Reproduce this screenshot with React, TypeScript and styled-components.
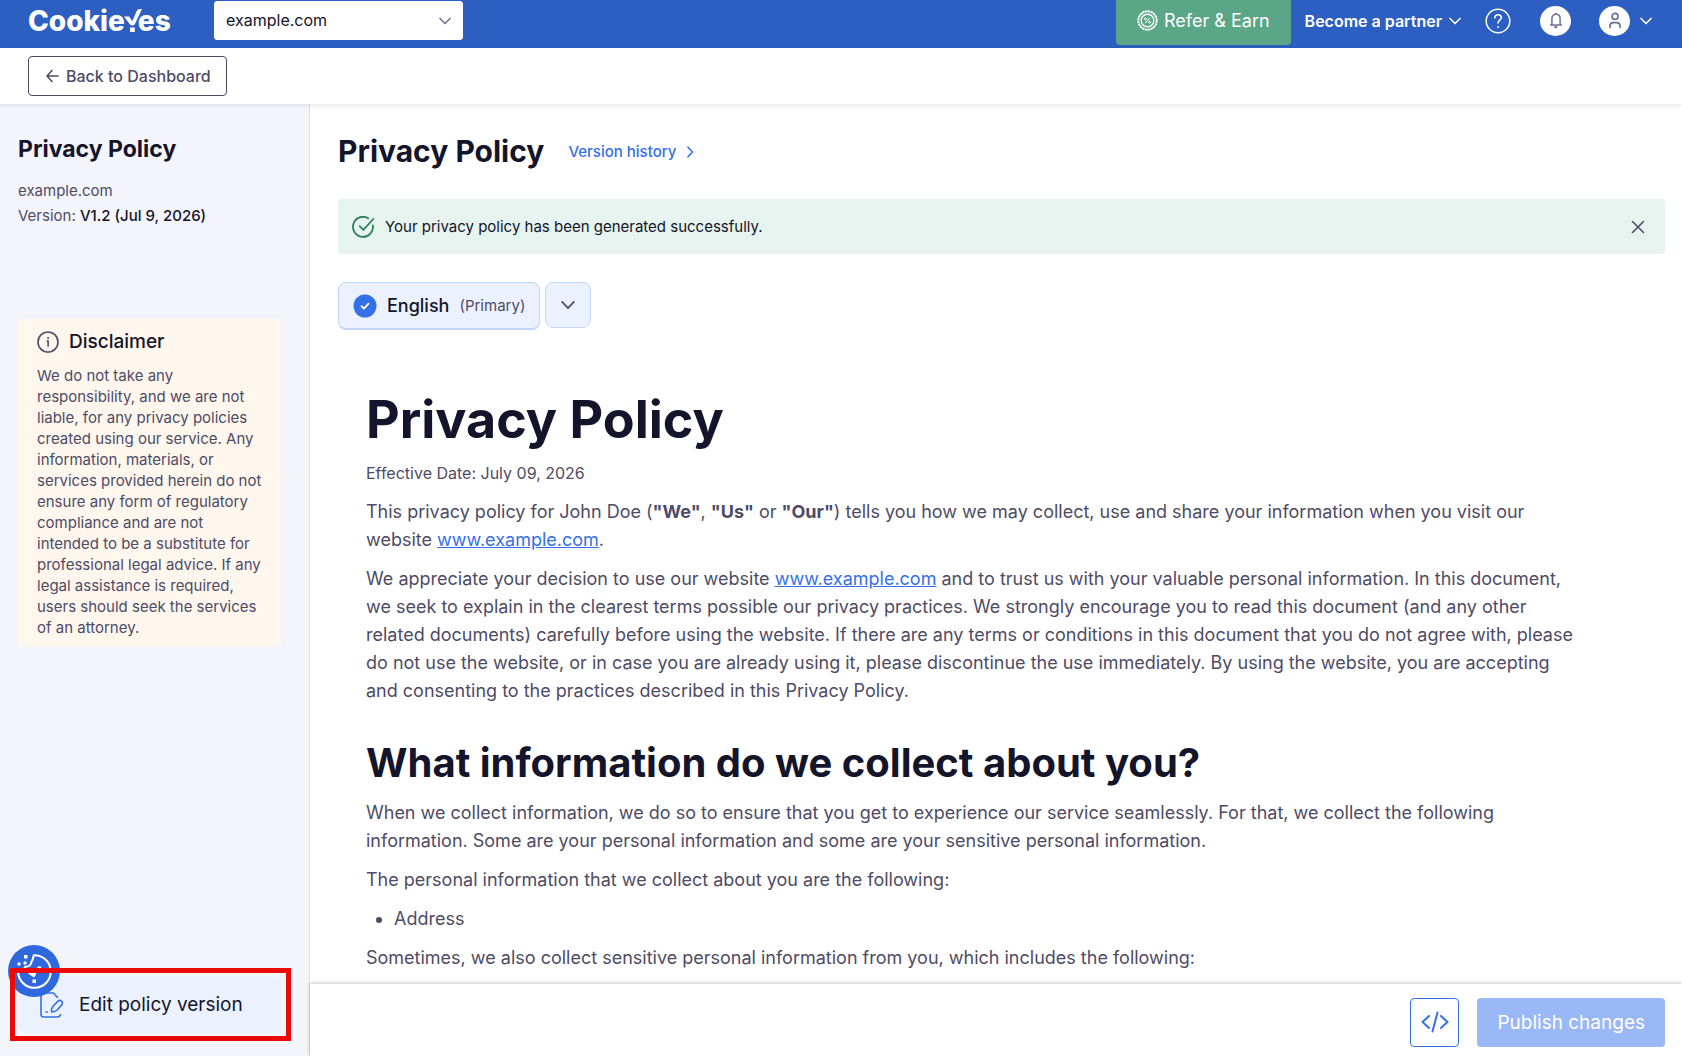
import React from "react";
import styled, { createGlobalStyle } from "styled-components";

const ink = "#14142b";
const body = "#4e4b66";
const blue = "#3570e8";

const GlobalStyle = createGlobalStyle`
  *, *::before, *::after { box-sizing: border-box; }
  html, body, #root { height: 100%; }
  body {
    margin: 0;
    background: #fff;
    color: ${body};
    font-family: Inter, "Liberation Sans", sans-serif;
    font-size: 16px;
    -webkit-font-smoothing: antialiased;
  }
  button, select { font: inherit; color: inherit; }
  button { cursor: pointer; }
  h1, h2, h3, p, ul { margin: 0; }
`;

const Page = styled.div`
  display: flex;
  flex-direction: column;
  height: 100vh;
  overflow: hidden;
`;

const TopBar = styled.header`
  display: flex;
  align-items: flex-start;
  flex: none;
  height: 48px;
  padding: 0 30px 0 28px;
  background: #2c5fc1;
  color: #fff;
`;

const Brand = styled.a`
  display: flex;
  align-items: center;
  width: 186px;
  height: 42px;
  color: #fff;
  font-size: 28px;
  font-weight: 800;
  line-height: 42px;
  text-decoration: none;
`;

const BrandCheck = styled.svg`
  flex: none;
  width: 19px;
  height: 24px;
  margin: 0 -4px 0 -2px;
`;

const SiteField = styled.label`
  display: grid;
  align-items: center;
  width: 249px;
  height: 39px;
  margin-top: 1px;
  border-radius: 4px;
  background: #fff;
  color: #6e7191;

  > * { grid-area: 1 / 1; }
  > svg { justify-self: end; margin-right: 12px; pointer-events: none; }
`;

const SiteSelect = styled.select`
  appearance: none;
  width: 100%;
  height: 100%;
  padding: 0 36px 2px 12px;
  border: 0;
  border-radius: 4px;
  background: #fff;
  color: ${ink};
`;

const TopActions = styled.nav`
  display: flex;
  align-items: center;
  height: 41px;
  margin-left: auto;
`;

const ReferLink = styled.a`
  display: flex;
  align-items: center;
  align-self: flex-start;
  gap: 6px;
  height: 45px;
  margin-right: 14px;
  padding: 0 21px 4px;
  border-radius: 0 0 4px 4px;
  background: #5ba687;
  color: #fff;
  font-size: 18px;
  text-decoration: none;
`;

const PartnerButton = styled.button`
  display: flex;
  align-items: center;
  gap: 7px;
  margin-right: 24px;
  padding: 0;
  border: 0;
  background: none;
  color: #fff;
  font-weight: 600;
`;

const IconButton = styled.button<{ $gap?: number }>`
  display: flex;
  align-items: center;
  gap: 10px;
  margin-right: ${(p) => p.$gap ?? 0}px;
  padding: 0;
  border: 0;
  background: none;
  color: #fff;
`;

const Disc = styled.span`
  display: flex;
  align-items: center;
  justify-content: center;
  width: 31px;
  height: 30px;
  border-radius: 50%;
  background: #fff;
  color: #6e7191;
`;

const SubBar = styled.div`
  position: relative;
  display: flex;
  align-items: center;
  flex: none;
  height: 56px;
  padding: 0 28px;
  background: #fff;
  box-shadow: 0 1px 5px rgba(20, 20, 43, 0.12);
`;

const BackButton = styled.button`
  display: flex;
  align-items: center;
  gap: 7px;
  height: 40px;
  padding: 0 15px 0 17px;
  border: 1px solid ${body};
  border-radius: 4px;
  background: #fff;
  font-weight: 500;
`;

const Columns = styled.div`
  display: flex;
  flex: 1;
  min-height: 0;
`;

const Sidebar = styled.aside`
  display: flex;
  flex-direction: column;
  flex: none;
  width: 310px;
  padding: 29px 28px 23px 18px;
  border-right: 1px solid #dfe0e6;
  background: #f4f5fb;
`;

const SideTitle = styled.h2`
  margin-bottom: 13px;
  color: ${ink};
  font-size: 23px;
  font-weight: 700;
  line-height: 32px;
`;

const SideLine = styled.p`
  font-size: 15px;
  line-height: 25px;

  strong { color: ${ink}; font-weight: 500; }
`;

const Disclaimer = styled.section`
  margin-top: 91px;
  padding: 10px 18px 8px 19px;
  border-radius: 4px;
  background: #fff7ed;
`;

const DisclaimerTitle = styled.h3`
  display: flex;
  align-items: center;
  gap: 10px;
  margin-bottom: 10px;
  color: ${ink};
  font-size: 19px;
  font-weight: 500;
  line-height: 26px;

  svg { color: ${body}; }
`;

const DisclaimerText = styled.p`
  font-size: 15px;
  line-height: 21px;
`;

const EditArea = styled.div`
  position: relative;
  margin-top: auto;
`;

const EditButton = styled.button`
  display: flex;
  align-items: center;
  gap: 15px;
  width: 100%;
  height: 57px;
  padding: 0 22px;
  border: 0;
  border-radius: 8px;
  background: #ebf1ff;
  color: ${ink};
  font-size: 19px;
`;

const Highlight = styled.span`
  position: absolute;
  inset: -8px -10px -8px -8px;
  border: 5px solid #ea0a0a;
  pointer-events: none;
`;

const CookieButton = styled.button`
  position: absolute;
  top: -31px;
  left: -10px;
  display: flex;
  padding: 0;
  border: 0;
  border-radius: 50%;
  background: none;
`;

const Content = styled.div`
  display: flex;
  flex-direction: column;
  flex: 1;
  min-width: 0;
`;

const Scroller = styled.main`
  flex: 1;
  min-height: 0;
  padding: 28px 17px 0 28px;
  overflow-y: auto;
  scrollbar-width: none;
`;

const Heading = styled.div`
  display: flex;
  align-items: center;
  gap: 24px;
  margin-bottom: 28px;

  h1 {
    color: ${ink};
    font-size: 30px;
    font-weight: 700;
    line-height: 39px;
  }
`;

const HistoryLink = styled.a`
  display: flex;
  align-items: center;
  gap: 8px;
  color: ${blue};
  font-size: 15px;
  font-weight: 500;
  text-decoration: none;
`;

const Notice = styled.div`
  display: flex;
  align-items: center;
  gap: 10px;
  height: 55px;
  padding: 0 20px 0 14px;
  border-radius: 4px;
  background: #e6f3ee;
  color: ${ink};
  font-size: 15px;
`;

const CloseButton = styled.button`
  display: flex;
  margin-left: auto;
  padding: 0;
  border: 0;
  background: none;
  color: ${body};
`;

const Languages = styled.div`
  display: flex;
  align-items: flex-start;
  gap: 5px;
  margin: 28px 0 60px;
`;

const LanguageButton = styled.button<{ $compact?: boolean }>`
  display: flex;
  align-items: center;
  justify-content: center;
  gap: 10px;
  height: ${(p) => (p.$compact ? 46 : 48)}px;
  padding: 0 ${(p) => (p.$compact ? 15 : 14)}px;
  border: 1px solid #c3d6fa;
  border-bottom-width: ${(p) => (p.$compact ? 1 : 2)}px;
  border-radius: 8px;
  background: #ebf1fe;
  color: ${(p) => (p.$compact ? body : ink)};
  font-size: 18px;
  font-weight: 500;

  small { color: ${body}; font-size: 15px; font-weight: 400; }
`;

const Policy = styled.article`
  padding: 0 82px 0 28px;
  font-size: 18px;
  line-height: 28px;

  h1 {
    margin-bottom: 9px;
    color: ${ink};
    font-size: 52px;
    font-weight: 700;
    line-height: 60px;
  }
  h2 {
    margin: 34px 0 12px;
    color: ${ink};
    font-size: 40px;
    font-weight: 700;
    line-height: 48px;
  }
  p, ul { margin-bottom: 11px; }
  ul { padding-left: 28px; }
  a { color: ${blue}; text-decoration: underline; }
  strong { font-weight: 700; }
`;

const EffectiveDate = styled.p`
  font-size: 16px;
`;

const Footer = styled.footer`
  position: relative;
  display: flex;
  align-items: center;
  justify-content: flex-end;
  flex: none;
  gap: 18px;
  height: 72px;
  padding: 4px 17px 0;
  background: #fff;
  box-shadow: 0 -1px 4px rgba(0, 0, 0, 0.22);
`;

const CodeButton = styled.button`
  display: flex;
  align-items: center;
  justify-content: center;
  width: 49px;
  height: 49px;
  padding: 0;
  border: 1px solid ${blue};
  border-radius: 4px;
  background: #fff;
  color: ${blue};
`;

const PublishButton = styled.button`
  height: 49px;
  padding: 0 20px;
  border: 0;
  border-radius: 4px;
  background: #9ab7f6;
  color: #fff;
  font-size: 19px;
`;

function Chevron({ size = 12, weight = 1.5 }: { size?: number; weight?: number }) {
  return (
    <svg width={size} height={size} viewBox="0 0 12 12" fill="none" stroke="currentColor" strokeWidth={weight} strokeLinecap="round" strokeLinejoin="round" aria-hidden="true">
      <path d="M1 3.4 6 8.6l5-5.2" />
    </svg>
  );
}

function RewardIcon() {
  return (
    <svg width="21" height="21" viewBox="0 0 21 21" fill="none" stroke="currentColor" strokeWidth="1.4" aria-hidden="true">
      <circle cx="10.5" cy="10.5" r="9.2" strokeWidth="1.9" strokeDasharray="2.4 .5" />
      <circle cx="10.5" cy="10.5" r="6.3" />
      <path d="m8.4 13 4.2-5" strokeWidth="1.1" />
      <circle cx="8.4" cy="8.8" r=".9" strokeWidth="1" />
      <circle cx="12.6" cy="12.2" r=".9" strokeWidth="1" />
    </svg>
  );
}

function HelpIcon() {
  return (
    <svg width="26" height="26" viewBox="0 0 26 26" fill="none" stroke="currentColor" strokeWidth="1.5" strokeLinecap="round" aria-hidden="true">
      <circle cx="13" cy="13" r="11.8" />
      <path d="M9.8 10c0-2 1.3-3.3 3.2-3.3s3.3 1.2 3.3 3c0 2.3-3.3 2.6-3.3 5.2" />
      <circle cx="13" cy="19" r=".5" fill="currentColor" strokeWidth=".8" />
    </svg>
  );
}

function BellIcon() {
  return (
    <svg width="14" height="17" viewBox="0 0 14 17" fill="none" stroke="currentColor" strokeWidth="1.5" strokeLinejoin="round" strokeLinecap="round" aria-hidden="true">
      <path d="M7 1.2v1M2.9 12V6.5C2.9 4 4.7 2.3 7 2.3S11.1 4 11.1 6.500V12l1.200 1H1.700z" />
      <path d="M6 14.500h2v1.300H6z" fill="currentColor" strokeWidth=".8" />
    </svg>
  );
}

function UserIcon() {
  return (
    <svg width="14" height="17" viewBox="0 0 14 17" fill="none" stroke="currentColor" strokeWidth="1.7" strokeLinecap="round" aria-hidden="true">
      <circle cx="7" cy="4.4" r="3" />
      <path d="M2 15.500v-1.400C2 11.700 3.400 10.700 5.200 10.700h3.600c1.800 0 3.200 1 3.200 3.400v1.400" />
    </svg>
  );
}

function ArrowLeftIcon() {
  return (
    <svg width="13" height="14" viewBox="0 0 13 14" fill="none" stroke="currentColor" strokeWidth="1.5" strokeLinecap="round" strokeLinejoin="round" aria-hidden="true">
      <path d="M12 7H1M6 1.500 1 7l5 5.500" />
    </svg>
  );
}

function InfoIcon() {
  return (
    <svg width="22" height="22" viewBox="0 0 22 22" fill="none" stroke="currentColor" strokeWidth="1.6" strokeLinecap="round" aria-hidden="true">
      <circle cx="11" cy="11" r="10" />
      <path d="M10.200 10h.9v5" />
      <circle cx="11" cy="7" r=".5" fill="currentColor" strokeWidth="1" />
    </svg>
  );
}

function SuccessIcon() {
  return (
    <svg width="23" height="22" viewBox="0 0 23 22" fill="none" stroke="#2f7d5b" strokeWidth="1.8" strokeLinecap="round" strokeLinejoin="round" aria-hidden="true">
      <path d="M16.200 2.300A10 10 0 1 0 20.900 9.500" />
      <path d="m7.700 10.200 3.700 3.700L21.300 3" />
    </svg>
  );
}

function CheckDisc() {
  return (
    <svg width="24" height="24" viewBox="0 0 24 24" fill="none" aria-hidden="true">
      <circle cx="12" cy="12" r="11.5" fill={blue} />
      <path d="m8.500 12.200 2.400 2.400 4.600-5" stroke="#fff" strokeWidth="1.8" strokeLinecap="round" strokeLinejoin="round" />
    </svg>
  );
}

function CookieIcon() {
  return (
    <svg width="52" height="52" viewBox="0 0 52 52" fill="none" aria-hidden="true">
      <circle cx="26" cy="26" r="26" fill="#2f67dc" />
      <g stroke="#fff" strokeWidth="2.1" strokeLinejoin="round" strokeLinecap="round">
        <path d="M26 10.200A16.300 16.300 0 1 1 10.200 27.500c0-.8 0-1.600.2-2.400 2.800.8 6-.6 6.800-3.400 3.500.2 6.200-1.800 6.300-5.200 1.700-1.400 1.300-4.800 2.500-6.300z" />
        <path d="m22 28 3.700 2.600c1.500-4.400 3.300-6.600 6-8" strokeWidth="3" />
      </g>
      <g fill="#fff">
        <rect x="24.500" y="34.500" width="3.500" height="3.500" />
        <rect x="16" y="10" width="3.500" height="3.500" />
        <circle cx="11" cy="19" r="1.700" />
        <circle cx="17" cy="18" r="1.700" />
      </g>
    </svg>
  );
}

function EditIcon() {
  return (
    <svg width="24" height="26" viewBox="0 0 24 26" fill="none" stroke={blue} strokeWidth="1.6" strokeLinecap="round" strokeLinejoin="round" aria-hidden="true">
      <path d="M17.500 5.500 13.500 1H3.500C2.100 1 1 2.100 1 3.500v18.700C1 23.900 2.100 25 3.500 25h14c1.600 0 2.600-.8 2.900-2.300" />
      <path d="M11.500 19.800c-.4-2 .1-3.600 1.600-5.500l4.400-4.700c1.200-1.300 2.800-1.400 4-.5 1.200 1 1.200 2.700.1 4l-4.500 4.900c-1.600 1.500-3.200 2.100-5.600 1.800z" />
      <path d="M6 20h1.300" />
    </svg>
  );
}

export default function App() {
  return (
    <Page>
      <GlobalStyle />
      <TopBar>
        <Brand href="#home" aria-label="CookieYes">
          Cookie
          <BrandCheck viewBox="0 0 19 24" fill="#fff" aria-hidden="true">
            <path d="M1 7.500h5.200l3 4.700L13.500 2.500C14.200.8 15.300 0 17 0h2l-6.800 14.500c-.8 1.500-1.600 2-3 2-1.200 0-2-.5-2.800-1.700z" />
            <path d="M7 18.500h4.800V23H7z" />
          </BrandCheck>
          es
        </Brand>
        <SiteField>
          <SiteSelect aria-label="Site" defaultValue="example.com">
            <option>example.com</option>
          </SiteSelect>
          <Chevron />
        </SiteField>
        <TopActions>
          <ReferLink href="#refer">
            <RewardIcon />
            Refer &amp; Earn
          </ReferLink>
          <PartnerButton>
            Become a partner
            <Chevron />
          </PartnerButton>
          <IconButton $gap={29} aria-label="Help">
            <HelpIcon />
          </IconButton>
          <IconButton $gap={28} aria-label="Notifications">
            <Disc><BellIcon /></Disc>
          </IconButton>
          <IconButton aria-label="Account">
            <Disc><UserIcon /></Disc>
            <Chevron />
          </IconButton>
        </TopActions>
      </TopBar>
      <SubBar>
        <BackButton>
          <ArrowLeftIcon />
          Back to Dashboard
        </BackButton>
      </SubBar>
      <Columns>
        <Sidebar>
          <SideTitle>Privacy Policy</SideTitle>
          <SideLine>example.com</SideLine>
          <SideLine>Version: <strong>V1.2 (Jul 9, 2026)</strong></SideLine>
          <Disclaimer>
            <DisclaimerTitle><InfoIcon />Disclaimer</DisclaimerTitle>
            <DisclaimerText>
              We do not take any responsibility, and we are not liable, for any privacy policies
              created using our service. Any information, materials, or services provided herein do
              not ensure any form of regulatory compliance and are not intended to be a substitute
              for professional legal advice. If any legal assistance is required, users should seek
              the services of an attorney.
            </DisclaimerText>
          </Disclaimer>
          <EditArea>
            <EditButton><EditIcon />Edit policy version</EditButton>
            <CookieButton aria-label="Cookie settings"><CookieIcon /></CookieButton>
            <Highlight />
          </EditArea>
        </Sidebar>
        <Content>
          <Scroller>
            <Heading>
              <h1>Privacy Policy</h1>
              <HistoryLink href="#history">
                Version history
                <svg width="12" height="12" viewBox="0 0 12 12" fill="none" stroke="currentColor" strokeWidth="1.6" strokeLinecap="round" strokeLinejoin="round" aria-hidden="true">
                  <path d="m4 1.200 4.500 4.800L4 10.800" />
                </svg>
              </HistoryLink>
            </Heading>
            <Notice role="status">
              <SuccessIcon />
              Your privacy policy has been generated successfully.
              <CloseButton aria-label="Dismiss">
                <svg width="14" height="14" viewBox="0 0 14 14" fill="none" stroke="currentColor" strokeWidth="1.6" strokeLinecap="round" aria-hidden="true">
                  <path d="m1.500 1.500 11 11M12.500 1.500l-11 11" />
                </svg>
              </CloseButton>
            </Notice>
            <Languages>
              <LanguageButton>
                <CheckDisc />
                English
                <small>(Primary)</small>
              </LanguageButton>
              <LanguageButton $compact aria-label="More languages">
                <Chevron size={14} />
              </LanguageButton>
            </Languages>
            <Policy>
              <h1>Privacy Policy</h1>
              <EffectiveDate>Effective Date: July 09, 2026</EffectiveDate>
              <p>
                This privacy policy for John Doe (<strong>"We"</strong>, <strong>"Us"</strong> or{" "}
                <strong>"Our"</strong>) tells you how we may collect, use and share your information
                when you visit our website <a href="#site">www.example.com</a>.
              </p>
              <p>
                We appreciate your decision to use our website <a href="#site">www.example.com</a> and
                to trust us with your valuable personal information. In this document, we seek to
                explain in the clearest terms possible our privacy practices. We strongly encourage
                you to read this document (and any other related documents) carefully before using
                the website. If there are any terms or conditions in this document that you do not
                agree with, please do not use the website, or in case you are already using it,
                please discontinue the use immediately. By using the website, you are accepting and
                consenting to the practices described in this Privacy Policy.
              </p>
              <h2>What information do we collect about you?</h2>
              <p>
                When we collect information, we do so to ensure that you get to experience our
                service seamlessly. For that, we collect the following information. Some are your
                personal information and some are your sensitive personal information.
              </p>
              <p>The personal information that we collect about you are the following:</p>
              <ul>
                <li>Address</li>
              </ul>
              <p>Sometimes, we also collect sensitive personal information from you, which includes the following:</p>
            </Policy>
          </Scroller>
          <Footer>
            <CodeButton aria-label="Embed code">
              <svg width="28" height="22" viewBox="0 0 28 22" fill="none" stroke="currentColor" strokeWidth="2" strokeLinecap="round" strokeLinejoin="round" aria-hidden="true">
                <path d="M8 5 1.500 11 8 17M20 5l6.500 6L20 17M16.500 1.500l-5 19" />
              </svg>
            </CodeButton>
            <PublishButton>Publish changes</PublishButton>
          </Footer>
        </Content>
      </Columns>
    </Page>
  );
}
